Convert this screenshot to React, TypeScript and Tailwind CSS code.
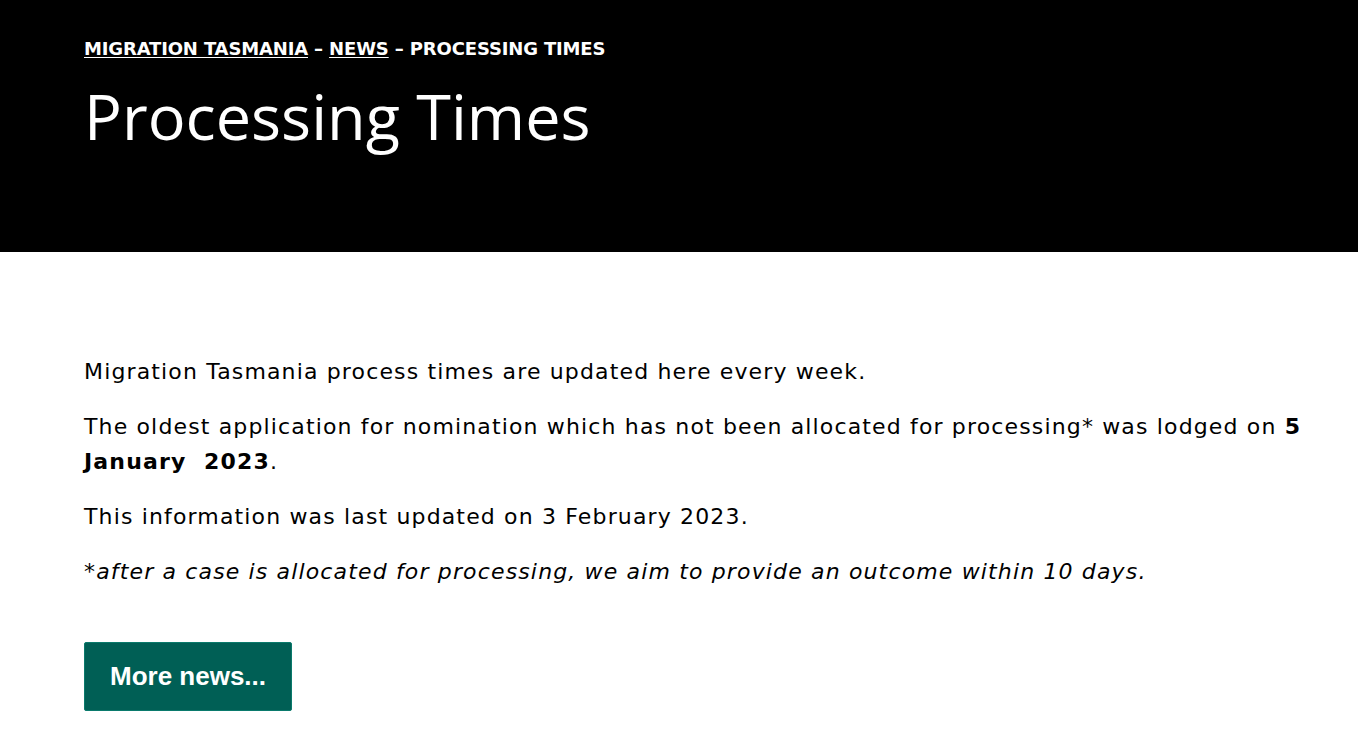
export default function App() {
  return (
    <div className="min-h-[733px] bg-white font-['DejaVu_Sans',sans-serif] text-black">
      <header className="h-[252px] bg-black px-[84px] pt-[37px] text-white">
        <nav className="text-[18px] font-bold uppercase leading-[24px] tracking-[-0.15px]">
          <a href="#" className="underline underline-offset-2">Migration Tasmania</a>
          <span> – </span>
          <a href="#" className="underline underline-offset-2">News</a>
          <span> – Processing Times</span>
        </nav>
        <h1 className="mt-[15px] font-['Open_Sans',sans-serif] text-[63px] leading-[80px] font-normal">Processing Times</h1>
      </header>

      <main className="px-[84px] pt-[102px]">
        <div className="w-[1245px] text-[22px] leading-[35px] tracking-[1.15px]">
          <p className="mb-[20px]">Migration Tasmania process times are updated here every week.</p>
          <p className="mb-[20px]">
            The oldest application for nomination which has not been allocated for processing* was lodged on{" "}
            <strong className="font-bold">5</strong> <strong className="font-bold">January&nbsp; 2023</strong>.
          </p>
          <p className="mb-[20px]">This information was last updated on 3 February 2023.</p>
          <p className="italic">*after a case is allocated for processing, we aim to provide an outcome within 10 days.</p>
        </div>

        <a
          href="#"
          className="mt-[53px] inline-flex h-[69px] w-[208px] items-center justify-center rounded-[2px] border border-[#0a7a6c] bg-[#005f55] font-['Liberation_Sans',sans-serif] text-[26px] font-bold text-white"
        >
          More news...
        </a>
      </main>
    </div>
  );
}
